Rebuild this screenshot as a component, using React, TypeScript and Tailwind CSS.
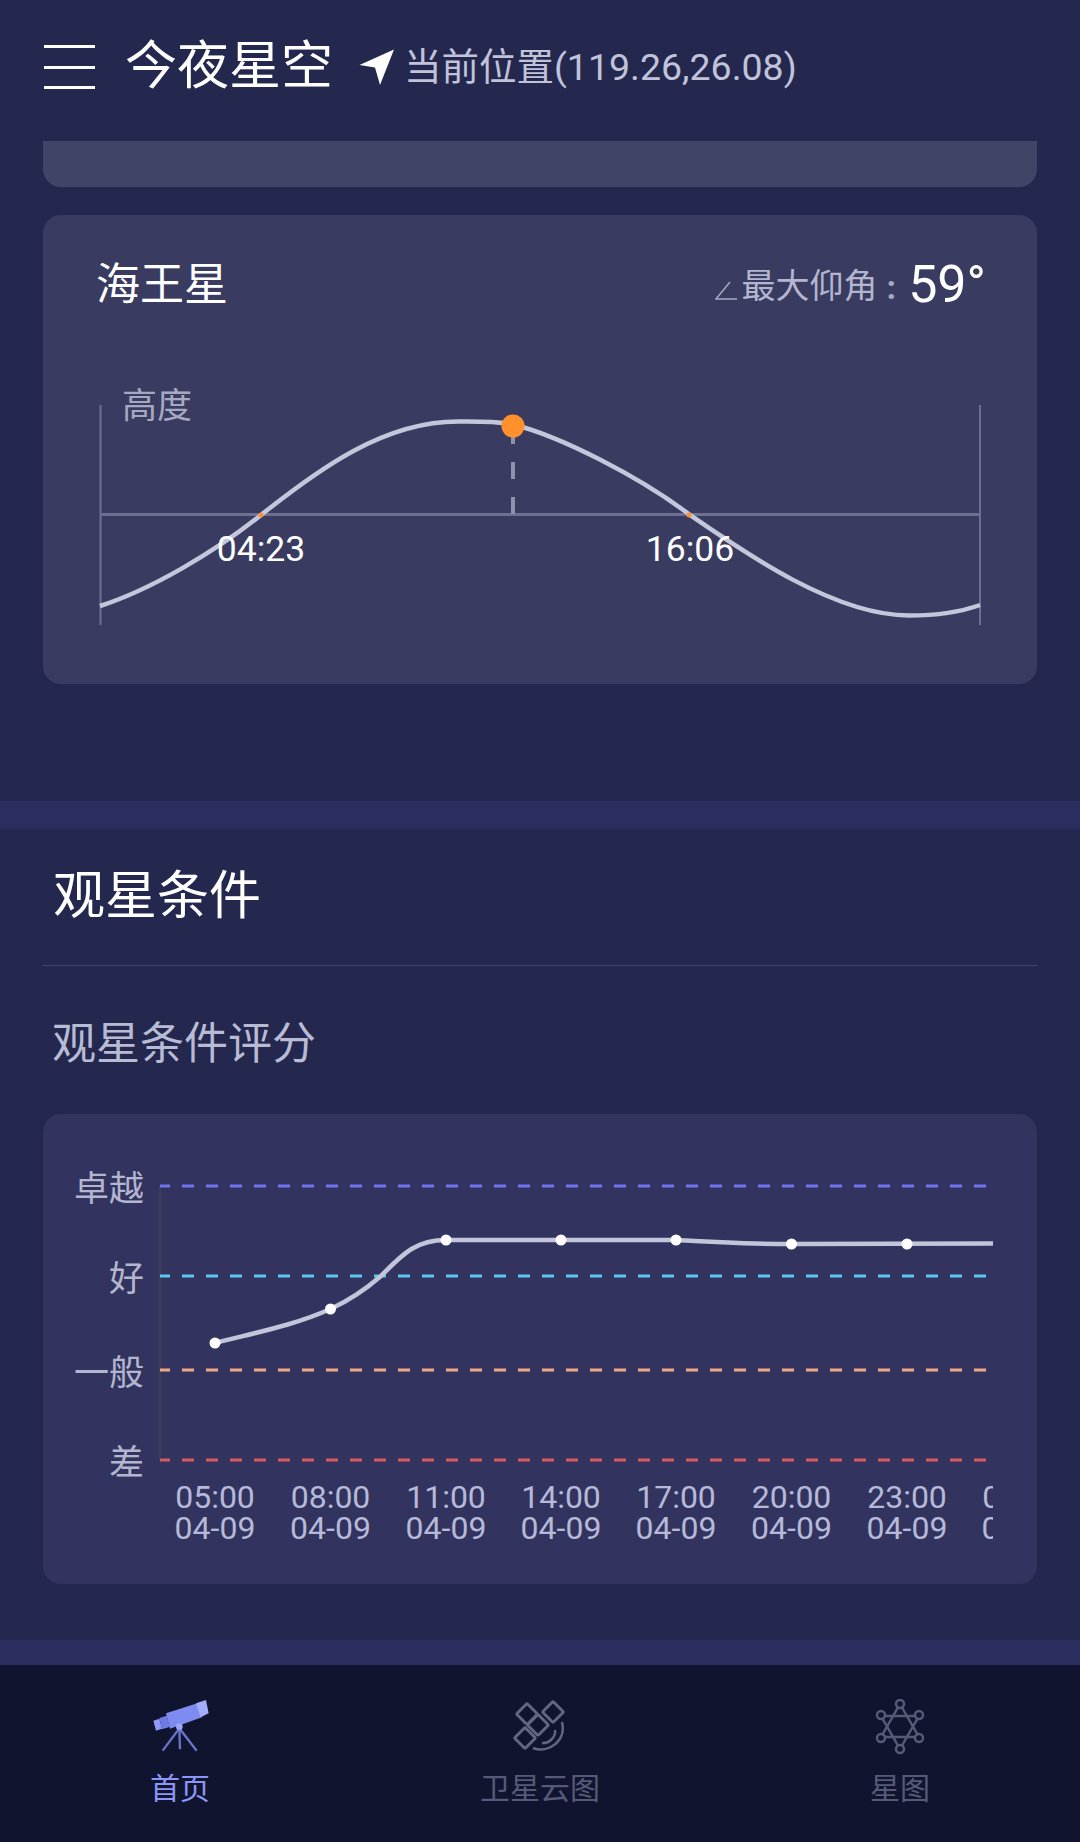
const FONT = 'font-["Roboto","Noto_Sans_CJK_SC",sans-serif]'

// score chart x positions, 3h apart
const scorePoints = [
  { x: 215, y: 1343, time: '05:00' },
  { x: 330.5, y: 1309, time: '08:00' },
  { x: 446, y: 1240, time: '11:00' },
  { x: 561, y: 1240, time: '14:00' },
  { x: 676, y: 1240, time: '17:00' },
  { x: 791.5, y: 1244, time: '20:00' },
  { x: 907, y: 1244, time: '23:00' },
  { x: 1022, y: null, time: '02:00' },
]

const levels = [
  { label: '卓越', y: 1186, color: '#7272f0' },
  { label: '好', y: 1276, color: '#5cc8f2' },
  { label: '一般', y: 1370, color: '#efa987' },
  { label: '差', y: 1460, color: '#d65b5e' },
]

function MenuIcon() {
  return (
    <div className="flex h-[44px] w-[51px] flex-col justify-between">
      <div className="h-[3px] bg-white" />
      <div className="h-[3px] bg-white" />
      <div className="h-[3px] bg-white" />
    </div>
  )
}

function LocationArrow() {
  return (
    <svg width="36" height="37" viewBox="0 0 36 37" className="block">
      <path d="M0.5 16 L35 0.5 L21 36 L16 18.5 Z" fill="#ffffff" />
    </svg>
  )
}

function TelescopeIcon() {
  return (
    <svg width="60" height="56" viewBox="90 57 180 168" className="block">
      <path d="M178 145 L128 212 M178 145 L180 208 M178 145 L230 212" stroke="#6a74cc" strokeWidth="7" fill="none" />
      <path d="M100 122 L118 116 L126 146 L108 152 Z" fill="#8f9af4" />
      <path d="M118 114 L140 107 L149 141 L126 148 Z" fill="#6f7be4" />
      <path d="M138 100 L232 70 L246 112 L150 146 Z" fill="#7e8bf0" />
      <path d="M228 70 L258 60 L266 100 L242 112 Z" fill="#a3adf9" />
      <circle cx="178" cy="140" r="10" fill="#9aa4f4" />
    </svg>
  )
}

function SatelliteIcon() {
  return (
    <svg width="70" height="65" viewBox="0 0 70 65" className="block shrink-0" fill="none" stroke="#62667f" strokeWidth="3">
      <rect x="40.5" y="9.5" width="15" height="15" rx="1.5" transform="rotate(45 48 17)" />
      <rect x="12.5" y="35.5" width="15" height="15" rx="1.5" transform="rotate(45 20 43)" />
      <rect x="14.5" y="11.5" width="15" height="15" rx="1.5" transform="rotate(45 22 19)" />
      <rect x="25.5" y="22.5" width="15" height="15" rx="1.5" transform="rotate(45 33 30)" />
      <path d="M28 53 C44 59 62 45 57 27" strokeWidth="2.5" />
      <path d="M37 48 C44 49 51 42 50 35" strokeWidth="2.5" />
    </svg>
  )
}

function StarMapIcon() {
  return (
    <svg width="52" height="56" viewBox="0 0 52 56" className="block" fill="none" stroke="#565a78" strokeWidth="2.5">
      <path d="M26 5 L45 38 H7 Z" />
      <path d="M26 50 L45 17 H7 Z" />
      <circle cx="26" cy="5" r="4" fill="#11142e" />
      <circle cx="45" cy="16" r="4" fill="#11142e" />
      <circle cx="45" cy="39" r="4" fill="#11142e" />
      <circle cx="26" cy="50" r="4" fill="#11142e" />
      <circle cx="7" cy="39" r="4" fill="#11142e" />
      <circle cx="7" cy="16" r="4" fill="#11142e" />
    </svg>
  )
}

function AltitudeChart() {
  return (
    <svg width="994" height="275" viewBox="43 380 994 275" className="block">
      <path d="M100.5 405 V625 M980 405 V625" stroke="#6d7091" strokeWidth="2" />
      <path d="M100 514.5 H980" stroke="#6d7091" strokeWidth="3" />
      <path d="M513 514 V426" stroke="#8f92ad" strokeWidth="4" strokeDasharray="17 18" />
      <path
        d="M100 606 C150 590 215 552 261 515 C320 468 385 421 459 421.5 C478 421.6 495 421 513 424.5 C560 436 640 477 690 515 C745 553 835 615.5 909 615.5 C935 615.5 958 613 980 605"
        stroke="#c4c6dc"
        strokeWidth="4.5"
        fill="none"
      />
      <circle cx="513" cy="426" r="11.5" fill="#ff902b" />
      <circle cx="261" cy="515" r="2.5" fill="#ff902b" />
      <circle cx="689" cy="515" r="2.5" fill="#ff902b" />
      <text x="122" y="418" fontSize="35" fill="#a7a9c2">高度</text>
      <text x="261" y="561" fontSize="35.5" fill="#ffffff" textAnchor="middle">04:23</text>
      <text x="690" y="561" fontSize="35.5" fill="#ffffff" textAnchor="middle">16:06</text>
    </svg>
  )
}

function ScoreChart() {
  return (
    <svg width="994" height="420" viewBox="43 1160 994 420" className="block">
      <path d="M160 1186 V1460" stroke="#3f4054" strokeWidth="2" />
      {levels.map((level) => (
        <g key={level.label}>
          <path d={`M160 ${level.y} H988`} stroke={level.color} strokeWidth="3" strokeDasharray="12 12" strokeDashoffset="2" />
          <text x="144" y={level.y + 15} fontSize="35" fill="#b4b6cf" textAnchor="end">{level.label}</text>
        </g>
      ))}
      <path
        d="M215 1343 C258 1332 295 1325 330.5 1309 C352 1299 366 1289 381 1276 C402 1255 415 1240 446 1240 L676 1240 C710 1242 750 1244 792 1244 L993 1243.5"
        stroke="#c3c5da"
        strokeWidth="4.5"
        fill="none"
      />
      {scorePoints.map((point) =>
        point.y ? <circle key={point.time} cx={point.x} cy={point.y} r="5.5" fill="#ffffff" /> : null,
      )}
      <svg x="43" y="1160" width="950" height="420" viewBox="43 1160 950 420">
        {scorePoints.map((point) => (
          <g key={point.time} fontSize="32" fill="#b6b9d8" textAnchor="middle">
            <text x={point.x} y="1508">{point.time}</text>
            <text x={point.x} y="1539">04-09</text>
          </g>
        ))}
      </svg>
    </svg>
  )
}

function NavItem({ icon, label, active }: { icon: React.ReactNode; label: string; active?: boolean }) {
  return (
    <div className="flex w-[360px] flex-col items-center">
      <div className="flex h-[56px] items-center justify-center">{icon}</div>
      <p className={`mt-[17px] text-[30px] leading-[34px] ${active ? 'text-[#8b96f7]' : 'text-[#565a78]'}`}>{label}</p>
    </div>
  )
}

export default function App() {
  return (
    <div className={`flex h-[1842px] w-[1080px] flex-col overflow-hidden bg-[#24274e] ${FONT}`}>
      <header className="flex h-[141px] shrink-0 items-center pb-[7px] pl-[44px]">
        <MenuIcon />
        <h1 className="ml-[30px] text-[52px] leading-none text-white">今夜星空</h1>
        <div className="ml-[26px] flex items-center">
          <LocationArrow />
          <span className="ml-[9px] mt-[1px] text-[37.5px] leading-none text-[#c0c3da]">当前位置(119.26,26.08)</span>
        </div>
      </header>

      <div className="mx-[43px] h-[46px] shrink-0 rounded-b-[18px] bg-[#404466]" />

      <section className="mx-[43px] mt-[28px] h-[469px] shrink-0 rounded-[18px] bg-[#393c60]">
        <div className="flex h-[136px] items-center justify-between pl-[53px] pr-[51px] pt-[3px]">
          <h2 className="text-[44px] leading-none text-white">海王星</h2>
          <div className="flex items-center">
            <svg width="22" height="19" viewBox="0 0 22 19" className="mt-[12px] block">
              <path d="M15 1 L1 18 H22" stroke="#a7a9c2" strokeWidth="1.5" fill="none" />
            </svg>
            <span className="ml-[5px] mt-[2px] text-[34px] leading-none text-[#b4b6cf]">最大仰角</span>
            <span className="ml-[9px] mt-[4px] text-[34px] font-bold leading-none text-[#a7aac4]">:</span>
            <span className="ml-[12px] text-[52px] leading-none text-white">59°</span>
          </div>
        </div>
        <div className="mt-[29px]">
          <AltitudeChart />
        </div>
      </section>

      <div className="mt-[117px] h-[28px] shrink-0 bg-[#2a2e5e]" />

      <section className="shrink-0">
        <div className="flex h-[136px] items-center pl-[53px]">
          <h2 className="text-[52px] leading-none text-white">观星条件</h2>
        </div>
        <div className="mx-[43px] h-px bg-[#41446a]" />
        <div className="flex h-[148px] items-center pl-[52px] pt-[8px]">
          <h3 className="text-[44px] leading-none text-[#b8bbd4]">观星条件评分</h3>
        </div>
        <div className="mx-[43px] h-[470px] rounded-[18px] bg-[#32345f] pt-[46px]">
          <ScoreChart />
        </div>
      </section>

      <div className="mt-[56px] h-[25px] shrink-0 bg-[#2a2e5e]" />

      <nav className="flex flex-1 items-start bg-[#11142e] pt-[34px]">
        <NavItem icon={<TelescopeIcon />} label="首页" active />
        <NavItem icon={<SatelliteIcon />} label="卫星云图" />
        <NavItem icon={<StarMapIcon />} label="星图" />
      </nav>
    </div>
  )
}
